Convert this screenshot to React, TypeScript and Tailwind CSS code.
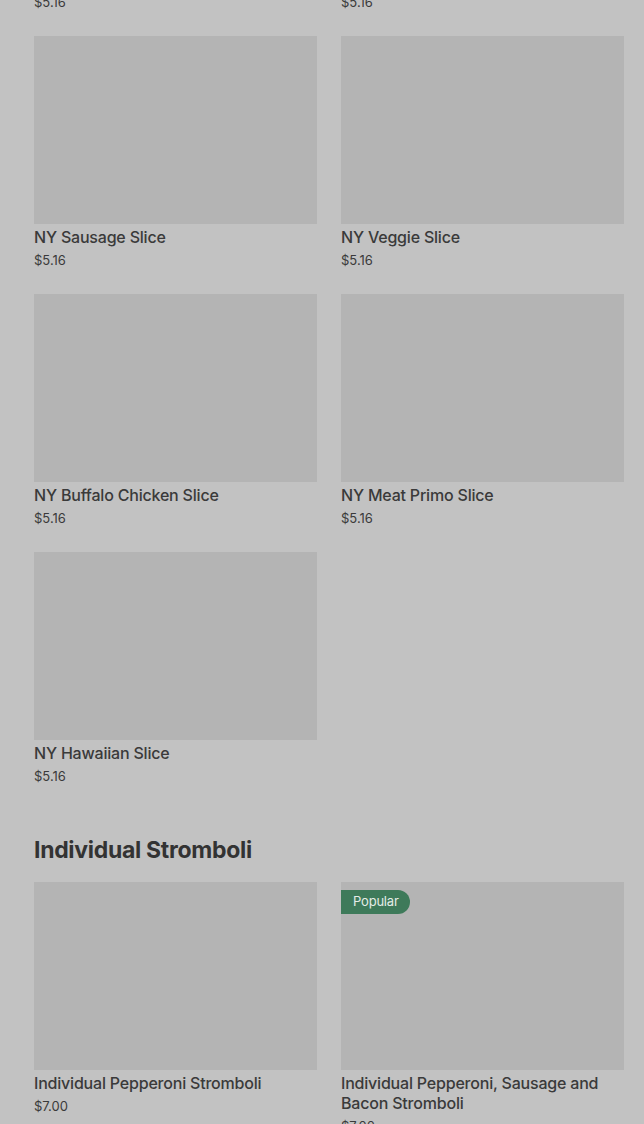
const slices = [
  { name: 'NY Cheese Slice', price: '$5.16' },
  { name: 'NY Pepperoni Slice', price: '$5.16' },
  { name: 'NY Sausage Slice', price: '$5.16' },
  { name: 'NY Veggie Slice', price: '$5.16' },
  { name: 'NY Buffalo Chicken Slice', price: '$5.16' },
  { name: 'NY Meat Primo Slice', price: '$5.16' },
  { name: 'NY Hawaiian Slice', price: '$5.16' },
];

const stromboli = [
  { name: 'Individual Pepperoni Stromboli', price: '$7.00' },
  { name: 'Individual Pepperoni, Sausage and Bacon Stromboli', price: '$7.00', popular: true },
];

type Item = { name: string; price: string; popular?: boolean };

function ItemCard({ item }: { item: Item }) {
  return (
    <div className="flex flex-col">
      <div className="relative h-[188px] w-full bg-[#b4b4b4]">
        {item.popular && (
          <span className="absolute left-0 top-[8px] flex h-[24px] items-center rounded-r-full bg-[#3e7a5a] pl-[12px] pr-[11px] text-[13px] tracking-[-0.2px] text-[#e4ece7]">
            Popular
          </span>
        )}
      </div>
      <p className="mt-[3px] text-[16px] font-medium leading-[20px] tracking-[-0.2px] text-[#3a3a3a]">{item.name}</p>
      <p className="mt-[4px] text-[13px] leading-[18px] text-[#3a3a3a]">{item.price}</p>
    </div>
  );
}

export default function App() {
  return (
    <div
      className="h-[1124px] overflow-hidden bg-[#c2c2c2] pl-[34px] pr-[20px]"
      style={{ fontFamily: 'Inter, "Noto Sans", sans-serif' }}
    >
      <div className="mt-[-222px] grid grid-cols-2 gap-x-[24px] gap-y-[25px]">
        {slices.map((s) => (
          <ItemCard key={s.name} item={s} />
        ))}
      </div>

      <h2 className="mt-[50px] text-[23px] font-bold leading-[30px] tracking-[-0.3px] text-[#333333]">
        Individual Stromboli
      </h2>

      <div className="mt-[17px] grid grid-cols-2 gap-x-[24px] gap-y-[25px]">
        {stromboli.map((s) => (
          <ItemCard key={s.name} item={s} />
        ))}
      </div>
    </div>
  );
}
